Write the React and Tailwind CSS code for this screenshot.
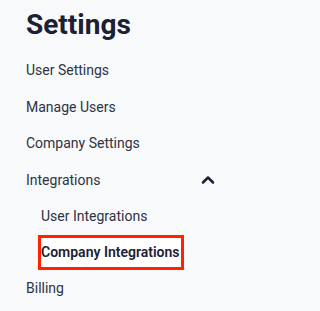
import { ChevronUp } from "lucide-react";

const items = ["User Settings", "Manage Users", "Company Settings"];

const App = () => {
    return (
        <div className="min-h-screen bg-[#f8f9fb]">
            <div className="w-[226px] h-[311px] pl-[26px] pr-[8px] pt-[6.5px] overflow-hidden" style={{ fontFamily: "Roboto, sans-serif" }}>
                <h1 className="text-[28px] leading-[36px] font-bold text-[#1b2134]">Settings</h1>
                <nav className="mt-[10px] flex flex-col text-[14px] text-[#2e3342]">
                    {items.map(item => (
                        <a key={item} href="#" className="h-[36.5px] flex items-center">{item}</a>
                    ))}
                    <div className="h-[36.5px] flex items-center justify-between">
                        <span>Integrations</span>
                        <ChevronUp size={20} strokeWidth={3} className="text-[#1b2134]" />
                    </div>
                    <div className="pl-[12px] flex flex-col">
                        <a href="#" className="h-9 flex items-center pl-[3px]">User Integrations</a>
                        <div className="h-9 flex items-center">
                            <a href="#" className="h-[35px] flex items-center border-[3px] border-[#ff2200] bg-white pr-[1px] font-semibold text-[#1b2134]">Company Integrations</a>
                        </div>
                    </div>
                    <a href="#" className="h-9 flex items-center">Billing</a>
                </nav>
            </div>
        </div>
    );
};

export default App;
